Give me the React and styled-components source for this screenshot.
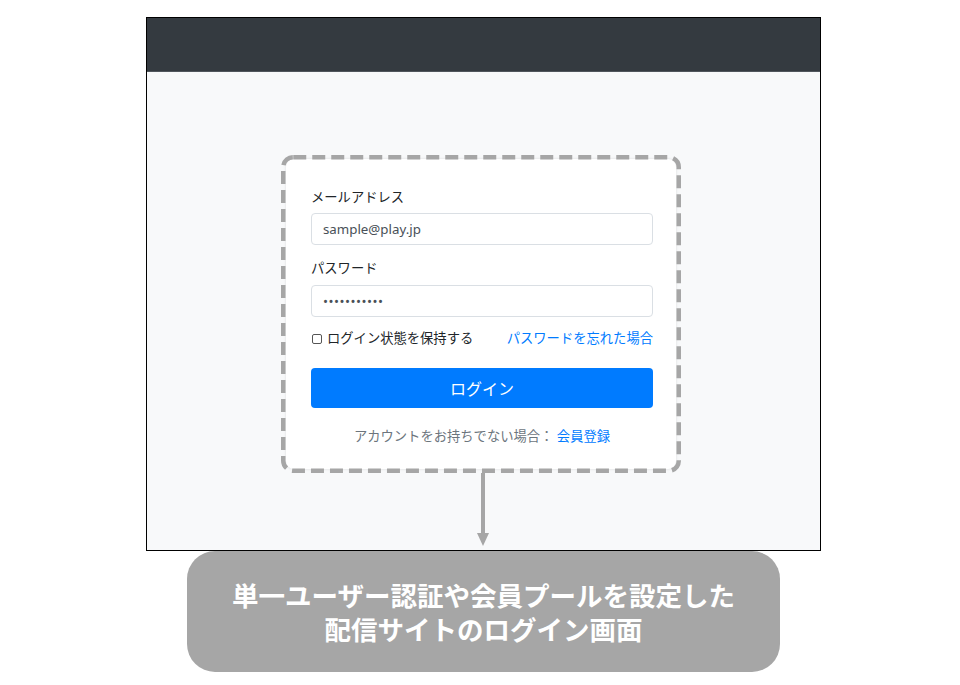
import React from "react";
import styled, { createGlobalStyle } from "styled-components";

const GlobalStyle = createGlobalStyle`
  body {
    margin: 0;
    background: #ffffff;
    font-family: "Noto Sans", "Noto Sans CJK JP", sans-serif;
  }
`;

const Page = styled.div`
  width: 960px;
  height: 685px;
  padding-top: 17px;
  box-sizing: border-box;
  overflow: hidden;
`;

const Frame = styled.div`
  width: 675px;
  height: 534px;
  margin-left: 146px;
  box-sizing: border-box;
  border: 1px solid #000;
  display: flex;
  flex-direction: column;
  background: #f8f9fa;
`;

const TopBar = styled.div`
  height: 53px;
  background: #343a40;
  border-bottom: 1px solid #50565c;
  flex-shrink: 0;
`;

const Stage = styled.div`
  flex: 1;
  padding: 83px 0 0 134px;
  display: flex;
  flex-direction: column;
  align-items: flex-start;
`;

const Card = styled.div`
  position: relative;
  width: 400px;
  padding: 4px 5px 4px 5px;
  box-sizing: border-box;
`;

const Outline = styled.svg`
  position: absolute;
  left: 0;
  top: 0;
  pointer-events: none;
`;

const Panel = styled.div`
  background: #fff;
  border-radius: 8px;
  box-shadow: 0 0 3px rgba(0, 0, 0, 0.12);
  height: 310px;
  box-sizing: border-box;
  padding: 28px 23px 0 25px;
  display: flex;
  flex-direction: column;
`;

const Label = styled.label`
  display: block;
  font-size: 13.3px;
  line-height: 21px;
  color: #212529;
  margin-bottom: ${(p) => p.$gap}px;
`;

const Field = styled.input`
  height: 32px;
  box-sizing: border-box;
  width: 100%;
  border: 1px solid #dadfe4;
  border-radius: 4px;
  padding: 0 11px;
  font-family: "Noto Sans", "Noto Sans CJK JP", sans-serif;
  font-size: 13.3px;
  color: #495057;
  background: #fff;
  outline: none;
  margin: 0 0 ${(p) => p.$after || 0}px;
  letter-spacing: ${(p) => (p.type === "password" ? "0.5px" : "0")};
`;

const OptionRow = styled.div`
  margin-top: 11px;
  height: 21px;
  display: flex;
  align-items: center;
  justify-content: space-between;
  font-size: 13.3px;
  line-height: 21px;
`;

const Remember = styled.span`
  display: flex;
  align-items: center;
  color: #212529;
`;

const Box = styled.span`
  width: 8px;
  height: 8px;
  border: 1px solid #555;
  border-radius: 2px;
  margin: 0 5px 0 1px;
  background: #fff;
`;

const Link = styled.a`
  color: #007bff;
  text-decoration: none;
`;

const Submit = styled.button`
  margin-top: 19px;
  height: 40px;
  width: 100%;
  border: none;
  border-radius: 4px;
  background: #007bff;
  color: #fff;
  font-family: "Noto Sans", "Noto Sans CJK JP", sans-serif;
  font-size: 16px;
`;

const Footer = styled.p`
  margin: 18px 0 0;
  text-align: center;
  font-size: 13.3px;
  line-height: 21px;
  color: #6c757d;
`;

const Arrow = styled.svg`
  display: block;
  margin-left: 194px;
`;

const Caption = styled.div`
  margin: 0 0 0 187px;
  width: 593px;
  height: 121px;
  border-radius: 28px;
  background: #a6a6a6;
  color: #fff;
  display: flex;
  flex-direction: column;
  align-items: center;
  justify-content: center;
  font-family: "Noto Sans CJK JP", sans-serif;
  font-weight: 700;
  font-size: 26.5px;
  line-height: 34px;
  text-align: center;
`;

export default function App() {
  return (
    <Page>
      <GlobalStyle />
      <Frame>
        <TopBar />
        <Stage>
          <Card>
            <Panel>
              <Label $gap={5}>メールアドレス</Label>
              <Field type="text" defaultValue="sample@play.jp" readOnly $after={13} />
              <Label $gap={6}>パスワード</Label>
              <Field type="password" defaultValue="samplepass1" readOnly />
              <OptionRow>
                <Remember>
                  <Box />
                  ログイン状態を保持する
                </Remember>
                <Link href="#">パスワードを忘れた場合</Link>
              </OptionRow>
              <Submit>ログイン</Submit>
              <Footer>
                アカウントをお持ちでない場合： <Link href="#">会員登録</Link>
              </Footer>
            </Panel>
            <Outline width="400" height="318" viewBox="0 0 400 318">
              <rect
                x="2.25"
                y="2.25"
                width="395.5"
                height="313.5"
                rx="10"
                fill="none"
                stroke="#a6a6a6"
                strokeWidth="4.5"
                strokeDasharray="13 6"
              />
            </Outline>
          </Card>
          <Arrow width="16" height="73" viewBox="0 0 16 73">
            <rect x="6" y="0" width="4" height="62" fill="#a6a6a6" />
            <polygon points="2,60 14,60 8,73" fill="#a6a6a6" />
          </Arrow>
        </Stage>
      </Frame>
      <Caption>
        <span>単一ユーザー認証や会員プールを設定した</span>
        <span>配信サイトのログイン画面</span>
      </Caption>
    </Page>
  );
}
